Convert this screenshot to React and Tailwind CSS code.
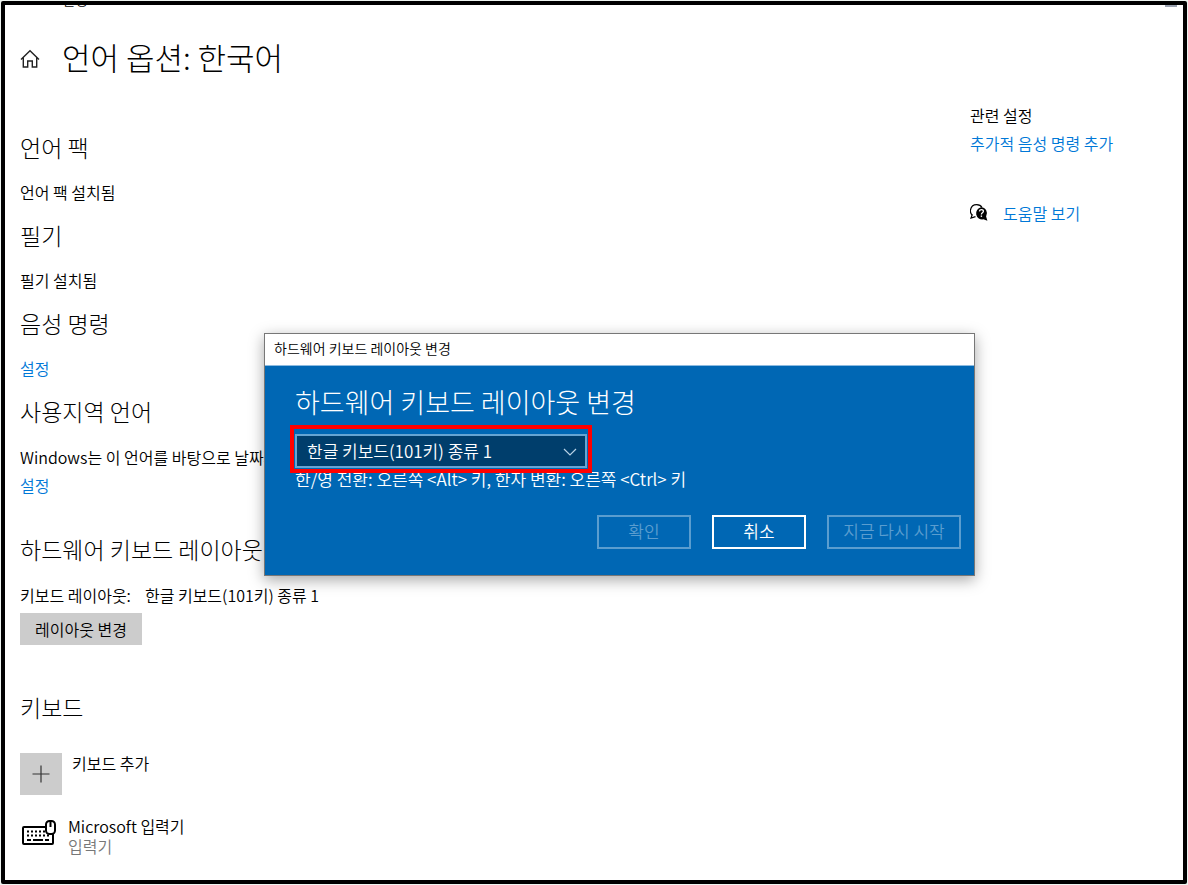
import React, { useState } from 'react';

const layouts = [
  '한글 키보드(101키) 종류 1',
  '한글 키보드(101키) 종류 2',
  '한글 키보드(101키) 종류 3',
  '한글 키보드(103/106키)',
];

const link = 'text-[#0078d7] hover:text-gray-500';

/* ── Icons ── */
const HomeIcon = () => (
  <svg className="h-5 w-5 shrink-0" viewBox="0 0 20 20" fill="none" stroke="#222" strokeWidth="1.4">
    <path d="M1 11.500 10 2.800l9 8.700M3.300 9.800v9.200h4.400v-6h4.600v6h4.400V9.800" />
  </svg>
);

const HelpIcon = () => (
  <svg className="h-5 w-5 shrink-0" viewBox="0 0 20 20">
    <path d="M2.200 12.200C.9 10.800.2 9 .4 7.300.9 3.800 3.500 1.600 6.700 1.600c2.400 0 4.300 1 5.300 2.900" fill="none" stroke="#000" strokeWidth="1.200" />
    <path d="M2.300 11.500 1 15 5.500 13.700" fill="none" stroke="#000" strokeWidth="1.200" />
    <path d="M11 4.300a6 6 0 0 1 5.100 9.100l1.300 4.300-4-1.400a6 6 0 1 1-2.400-12z" fill="#000" />
    <path d="M9.400 8.300c.2-1.200 1-1.700 2-1.700 1.200 0 2 .6 2 1.600 0 1.500-2 1.500-2 3.200" fill="none" stroke="#fff" strokeWidth="1.300" />
    <path d="M10.700 12.500h1.400v1.400h-1.400z" fill="#fff" />
  </svg>
);

const KeyboardMouseIcon = () => (
  <svg className="mt-1 h-[26px] w-[34px] shrink-0" viewBox="0 0 34 26" fill="none" stroke="#000" strokeWidth="2">
    <rect x="1" y="7" width="30" height="17" rx="1" />
    <path d="M5 11.500h20" strokeDasharray="2 2" />
    <path d="M5 15.500h22" strokeDasharray="2 2" />
    <path d="M5 20h4M11 20h10M23 20h4" />
    <rect x="24" y="1" width="9" height="13" rx="3.500" fill="#fff" />
    <path d="M28.500 2v5" strokeWidth="2" />
  </svg>
);

const Section = ({ title, children }) => (
  <section className="mb-[13px]">
    <h2 className="mb-[15px] text-[23px] leading-8 font-light">{title}</h2>
    {children}
  </section>
);

const LayoutDialog = ({ layout, onLayoutChange }) => (
  <div
    role="dialog"
    aria-labelledby="dialog-title"
    className="absolute top-[328px] left-[259px] w-[711px] border border-[#777] bg-[#0067b4] text-white shadow-[0_4px_14px_rgba(0,0,0,0.35)]"
  >
    <div className="flex h-8 items-center border-b border-[#8dbbe0] bg-white px-[9px] pb-1 text-sm text-black">
      하드웨어 키보드 레이아웃 변경
    </div>
    <div className="px-[30px] pt-4 pb-[26px]">
      <h2 id="dialog-title" className="text-[27px] leading-10 font-light">하드웨어 키보드 레이아웃 변경</h2>
      <div className="relative mt-3 w-[292px]">
        <select
          aria-label="키보드 레이아웃"
          value={layout}
          onChange={(e) => onLayoutChange(e.target.value)}
          className="block h-[34px] w-full appearance-none border-2 border-[#66a4d2] bg-[#003e6c] px-2.5 text-[17px] text-white outline-none"
        >
          {layouts.map((l) => <option key={l}>{l}</option>)}
        </select>
        <svg className="pointer-events-none absolute top-3 right-2.5 h-3 w-3.5" viewBox="0 0 14 12" fill="none" stroke="#b8d2e5" strokeWidth="1.200">
          <path d="m1 3 6 6 6-6" />
        </svg>
        {/* highlight frame */}
        <div className="pointer-events-none absolute -inset-x-[5px] -top-[9px] -bottom-[5px] border-4 border-[#ff0000]" />
      </div>
      <p className="text-[17px] leading-[22px]">한/영 전환: 오른쪽 &lt;Alt&gt; 키, 한자 변환: 오른쪽 &lt;Ctrl&gt; 키</p>
      <div className="-mr-[17px] mt-[25px] flex justify-end gap-[21px] text-[17px] leading-7">
        <button disabled className="h-[34px] w-[94px] border-2 border-[#5a9dcf] pb-1 text-[#5a9dcf]">확인</button>
        <button className="h-[34px] w-[94px] border-2 border-white pb-1">취소</button>
        <button disabled className="h-[34px] w-[134px] border-2 border-[#5a9dcf] pb-1 text-[#5a9dcf]">지금 다시 시작</button>
      </div>
    </div>
  </div>
);

export default function App() {
  const [layout, setLayout] = useState(layouts[0]);

  return (
    <div className="min-h-screen bg-[#eef4f0] p-px font-['Noto_Sans_CJK_KR',sans-serif]">
      <div className="relative min-h-[883px] rounded-xs border-4 border-black bg-white text-base leading-7 font-[350] text-black">
        {/* window caption, mostly scrolled out of view */}
        <header className="flex h-0.5 items-end justify-between overflow-hidden pr-1.5 pl-[57px] text-sm leading-4">
          <span>설정</span>
          <span className="h-0.5 w-3 bg-gray-400" />
        </header>

        <div className="flex h-[102px] items-center gap-[22px] px-[15px]">
          <HomeIcon />
          <h1 className="pb-0.5 text-[31px] leading-10 font-light">언어 옵션: 한국어</h1>
        </div>

        <div className="flex justify-between">
          <main className="px-[15px] pt-[22px]">
            <Section title="언어 팩">
              <p>언어 팩 설치됨</p>
            </Section>
            <Section title="필기">
              <p>필기 설치됨</p>
            </Section>
            <Section title="음성 명령">
              <a href="#speech" className={link}>설정</a>
            </Section>
            <Section title="사용지역 언어">
              <p className="pt-px whitespace-nowrap">Windows는 이 언어를 바탕으로 날짜와 시간 형식을 지정합니다.</p>
              <a href="#region" className={link}>설정</a>
            </Section>

            <div className="mt-[34px]">
              <Section title="하드웨어 키보드 레이아웃">
                <p className="flex gap-3.5 pt-px">
                  <span>키보드 레이아웃:</span>
                  <span>{layout}</span>
                </p>
                <button className="mt-1 block h-8 bg-[#ccc] px-[15px]">레이아웃 변경</button>
              </Section>
            </div>

            <div className="mt-[46px]">
              <Section title="키보드">
                <button className="mt-[30px] flex gap-2.5 text-left leading-5">
                  <span className="flex h-[42px] w-[42px] items-center justify-center bg-[#ccc]">
                    <svg className="h-[18px] w-[18px]" viewBox="0 0 18 18" stroke="#333" strokeWidth="1.200">
                      <path d="M9 .5v17M.5 9h17" />
                    </svg>
                  </span>
                  키보드 추가
                </button>
                <div className="mt-[21px] flex items-start gap-3 pl-0.5 leading-5">
                  <KeyboardMouseIcon />
                  <div>
                    <p>Microsoft 입력기</p>
                    <p className="text-[#777]">입력기</p>
                  </div>
                </div>
              </Section>
            </div>
          </main>

          <aside className="w-[213px] shrink-0">
            <h3 className="-mt-2">관련 설정</h3>
            <a href="#related" className={link}>추가적 음성 명령 추가</a>
            <div className="mt-[42px] flex items-center gap-[13px]">
              <HelpIcon />
              <a href="#help" className={link}>도움말 보기</a>
            </div>
          </aside>
        </div>

        <LayoutDialog layout={layout} onLayoutChange={setLayout} />
      </div>
    </div>
  );
}
